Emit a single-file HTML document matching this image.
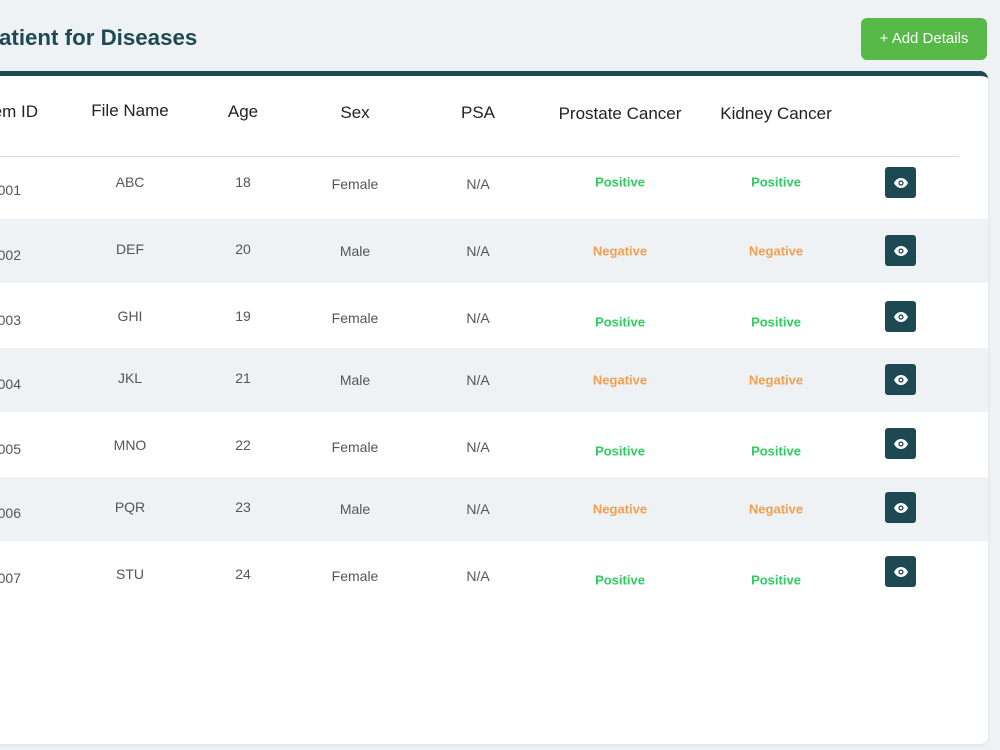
<!DOCTYPE html>
<html><head><meta charset="utf-8">
<style>
*{margin:0;padding:0;box-sizing:border-box}
html,body{width:1000px;height:750px;overflow:hidden;background:#eef2f5;font-family:"Liberation Sans",sans-serif}
.a{position:absolute;white-space:nowrap}
.title{top:22px;font-size:22.3px;font-weight:bold;color:#1d4a52;line-height:32px;left:-1px}
.btn{left:861px;top:18px;width:126px;height:42px;background:#57b947;border-radius:6px;color:#fff;font-size:15px;text-align:center;line-height:42px}
.card{left:-20px;top:71px;width:1008px;height:673px;background:#fff;border-top:5px solid #1d4a52;border-radius:8px;box-shadow:0 1px 4px rgba(0,0,0,.08)}
.row{position:absolute;left:0;width:988px;background:#eef2f5}
.h{font-size:17px;color:#222;transform:translate(-50%,-50%)}
.c{font-size:14px;color:#555;transform:translate(-50%,-50%)}
.r{font-size:14px;color:#555;transform:translateY(-50%);right:979px}
.p{font-size:13px;font-weight:bold;color:#2ecc61;transform:translate(-50%,-50%)}
.n{font-size:13px;font-weight:bold;color:#f0a050;transform:translate(-50%,-50%)}
.eye{left:885px;width:31px;height:31px;background:#1d4a52;border-radius:3px;display:flex;align-items:center;justify-content:center}
</style></head><body>
<div class="a title">atient for Diseases</div>
<div class="a btn">+ Add Details</div>
<div class="a card"></div>
<div class="row" style="top:219px;height:64px"></div>
<div class="row" style="top:348px;height:64px"></div>
<div class="row" style="top:477px;height:64px"></div>
<div class="a" style="left:0;top:156px;width:959px;height:1px;background:#dcdcdc"></div>

<div class="a h" style="right:962px;top:112px;transform:translateY(-50%)">em ID</div>
<div class="a h" style="left:130px;top:111px">File Name</div>
<div class="a h" style="left:243px;top:112px">Age</div>
<div class="a h" style="left:355px;top:113px">Sex</div>
<div class="a h" style="left:478px;top:113px">PSA</div>
<div class="a h" style="left:620px;top:114px">Prostate Cancer</div>
<div class="a h" style="left:776px;top:114px">Kidney Cancer</div>

<div class="a r" style="top:190px">001</div>
<div class="a c" style="left:130px;top:182px">ABC</div>
<div class="a c" style="left:243px;top:182px">18</div>
<div class="a c" style="left:355px;top:184px">Female</div>
<div class="a c" style="left:478px;top:184px">N/A</div>
<div class="a p" style="left:620px;top:182px">Positive</div>
<div class="a p" style="left:776px;top:182px">Positive</div>
<div class="a eye" style="top:167px"><svg width="16" height="12" viewBox="0 0 16 12"><path d="M1 6C3 2 6 1 8 1s5 1 7 5c-2 4-5 5-7 5S3 10 1 6z" fill="#fff"/><circle cx="8" cy="6" r="2.6" fill="#1d4a52"/><circle cx="8" cy="6" r="1.3" fill="#fff"/></svg></div>

<div class="a r" style="top:255px">002</div>
<div class="a c" style="left:130px;top:249px">DEF</div>
<div class="a c" style="left:243px;top:249px">20</div>
<div class="a c" style="left:355px;top:251px">Male</div>
<div class="a c" style="left:478px;top:251px">N/A</div>
<div class="a n" style="left:620px;top:251px">Negative</div>
<div class="a n" style="left:776px;top:251px">Negative</div>
<div class="a eye" style="top:235px"><svg width="16" height="12" viewBox="0 0 16 12"><path d="M1 6C3 2 6 1 8 1s5 1 7 5c-2 4-5 5-7 5S3 10 1 6z" fill="#fff"/><circle cx="8" cy="6" r="2.6" fill="#1d4a52"/><circle cx="8" cy="6" r="1.3" fill="#fff"/></svg></div>

<div class="a r" style="top:320px">003</div>
<div class="a c" style="left:130px;top:316px">GHI</div>
<div class="a c" style="left:243px;top:316px">19</div>
<div class="a c" style="left:355px;top:318px">Female</div>
<div class="a c" style="left:478px;top:318px">N/A</div>
<div class="a p" style="left:620px;top:322px">Positive</div>
<div class="a p" style="left:776px;top:322px">Positive</div>
<div class="a eye" style="top:301px"><svg width="16" height="12" viewBox="0 0 16 12"><path d="M1 6C3 2 6 1 8 1s5 1 7 5c-2 4-5 5-7 5S3 10 1 6z" fill="#fff"/><circle cx="8" cy="6" r="2.6" fill="#1d4a52"/><circle cx="8" cy="6" r="1.3" fill="#fff"/></svg></div>

<div class="a r" style="top:384px">004</div>
<div class="a c" style="left:130px;top:378px">JKL</div>
<div class="a c" style="left:243px;top:378px">21</div>
<div class="a c" style="left:355px;top:380px">Male</div>
<div class="a c" style="left:478px;top:380px">N/A</div>
<div class="a n" style="left:620px;top:380px">Negative</div>
<div class="a n" style="left:776px;top:380px">Negative</div>
<div class="a eye" style="top:364px"><svg width="16" height="12" viewBox="0 0 16 12"><path d="M1 6C3 2 6 1 8 1s5 1 7 5c-2 4-5 5-7 5S3 10 1 6z" fill="#fff"/><circle cx="8" cy="6" r="2.6" fill="#1d4a52"/><circle cx="8" cy="6" r="1.3" fill="#fff"/></svg></div>

<div class="a r" style="top:449px">005</div>
<div class="a c" style="left:130px;top:445px">MNO</div>
<div class="a c" style="left:243px;top:445px">22</div>
<div class="a c" style="left:355px;top:447px">Female</div>
<div class="a c" style="left:478px;top:447px">N/A</div>
<div class="a p" style="left:620px;top:451px">Positive</div>
<div class="a p" style="left:776px;top:451px">Positive</div>
<div class="a eye" style="top:428px"><svg width="16" height="12" viewBox="0 0 16 12"><path d="M1 6C3 2 6 1 8 1s5 1 7 5c-2 4-5 5-7 5S3 10 1 6z" fill="#fff"/><circle cx="8" cy="6" r="2.6" fill="#1d4a52"/><circle cx="8" cy="6" r="1.3" fill="#fff"/></svg></div>

<div class="a r" style="top:513px">006</div>
<div class="a c" style="left:130px;top:507px">PQR</div>
<div class="a c" style="left:243px;top:507px">23</div>
<div class="a c" style="left:355px;top:509px">Male</div>
<div class="a c" style="left:478px;top:509px">N/A</div>
<div class="a n" style="left:620px;top:509px">Negative</div>
<div class="a n" style="left:776px;top:509px">Negative</div>
<div class="a eye" style="top:492px"><svg width="16" height="12" viewBox="0 0 16 12"><path d="M1 6C3 2 6 1 8 1s5 1 7 5c-2 4-5 5-7 5S3 10 1 6z" fill="#fff"/><circle cx="8" cy="6" r="2.6" fill="#1d4a52"/><circle cx="8" cy="6" r="1.3" fill="#fff"/></svg></div>

<div class="a r" style="top:578px">007</div>
<div class="a c" style="left:130px;top:574px">STU</div>
<div class="a c" style="left:243px;top:574px">24</div>
<div class="a c" style="left:355px;top:576px">Female</div>
<div class="a c" style="left:478px;top:576px">N/A</div>
<div class="a p" style="left:620px;top:580px">Positive</div>
<div class="a p" style="left:776px;top:580px">Positive</div>
<div class="a eye" style="top:556px"><svg width="16" height="12" viewBox="0 0 16 12"><path d="M1 6C3 2 6 1 8 1s5 1 7 5c-2 4-5 5-7 5S3 10 1 6z" fill="#fff"/><circle cx="8" cy="6" r="2.6" fill="#1d4a52"/><circle cx="8" cy="6" r="1.3" fill="#fff"/></svg></div>
</body></html>
